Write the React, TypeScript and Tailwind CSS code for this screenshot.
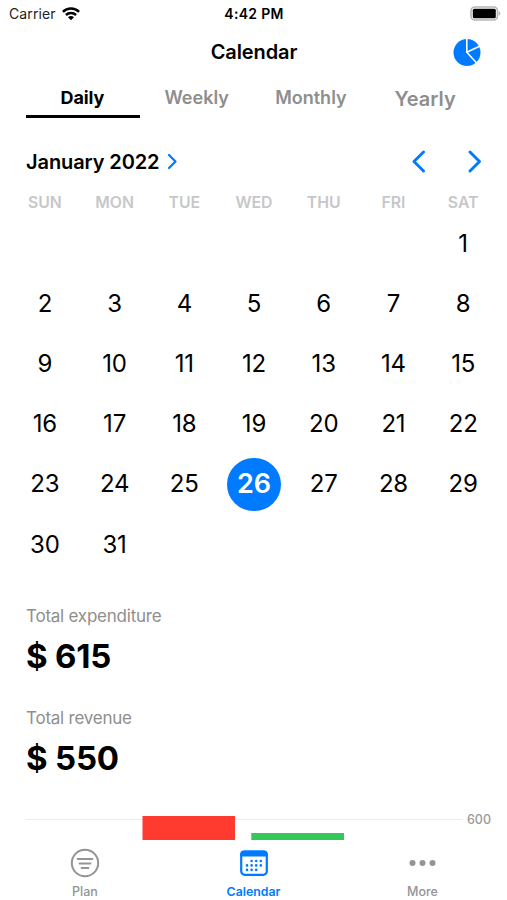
import React from 'react';

const weekdays = ['SUN', 'MON', 'TUE', 'WED', 'THU', 'FRI', 'SAT'];
const leadingBlanks = 6;
const selectedDay = 26;
const cells = [
  ...Array.from({ length: leadingBlanks }, () => 0),
  ...Array.from({ length: 31 }, (_, i) => i + 1),
];

const StatusBar = () => (
  <div className="grid h-[27px] grid-cols-3 items-center pl-[9px] pr-[6px] text-[14px] leading-none">
    <div className="flex items-center gap-[6px] text-[#222]">
      <span className="tracking-[0.1px]">Carrier</span>
      <svg width="18" height="14" viewBox="0 0 18 14" fill="none" stroke="#000" strokeWidth="2.5">
        <path d="M0.9 4.9C5.4 0.5 12.6 0.5 17.1 4.9" />
        <path d="M3.9 8C6.8 5.3 11.2 5.3 14.1 8" />
        <path d="M6 10.2C7.8 8.7 10.2 8.7 12 10.2L9 13.3Z" fill="#000" stroke="none" />
      </svg>
    </div>
    <span className="pt-px pr-[2px] text-center font-semibold tracking-[0.3px] whitespace-nowrap">4:42 PM</span>
    <div className="flex items-center justify-end">
      <svg width="31" height="15" viewBox="0 0 31 15">
        <rect x="1" y="1" width="26.5" height="13" rx="4" fill="#fff" stroke="#b5b5b5" strokeWidth="1.6" />
        <rect x="2.8" y="2.8" width="23" height="9.4" rx="1.5" fill="#000" />
        <path d="M28.8 5.3C30.8 6 30.8 9 28.8 9.7Z" fill="#b5b5b5" />
      </svg>
    </div>
  </div>
);

const Header = () => (
  <header className="grid h-[50px] grid-cols-3 items-center px-[26px]">
    <span />
    <h1 className="pl-px text-center text-[20px] font-semibold leading-none tracking-[-0.1px]">Calendar</h1>
    <button className="justify-self-end">
      <svg width="28" height="28" viewBox="0 0 28 28">
        <circle cx="14" cy="14.5" r="13.5" fill="#007aff" />
        <path d="M13.8 0V14.3L23.6 25M13.8 14.3L27 8" fill="none" stroke="#fff" strokeWidth="1.6" />
      </svg>
    </button>
  </header>
);

const Tabs = () => (
  <nav className="grid h-[41px] grid-cols-4 px-[26px] text-center text-[18px] font-semibold leading-[41px] text-[#8e8e8e]">
    <span className="h-[41px] border-b-[3px] border-black pr-px font-bold tracking-[-0.1px] text-black">Daily</span>
    <span>Weekly</span>
    <span className="pl-px">Monthly</span>
    <span className="pl-[2px] pt-[2px] text-[20px]">Yearly</span>
  </nav>
);

const Chevron = ({ size, stroke, left = false }: { size: number; stroke: number; left?: boolean }) => (
  <svg
    width={size / 2 + 2}
    height={size}
    viewBox={`0 0 ${size / 2 + 2} ${size}`}
    fill="none"
    stroke="#007aff"
    strokeWidth={stroke}
    strokeLinecap="round"
    strokeLinejoin="round"
    className={left ? 'rotate-180' : ''}
  >
    <path d={`M2 2L${size / 2} ${size / 2}L2 ${size - 2}`} />
  </svg>
);

const Month = () => (
  <section>
    <div className="flex h-[39px] items-center pl-[26px] pr-[26px]">
      <h2 className="pt-px text-[20px] font-semibold leading-none tracking-[-0.1px]">January 2022</h2>
      <span className="ml-[8px]"><Chevron size={17} stroke={2.3} /></span>
      <span className="ml-auto mr-[42px]"><Chevron size={23} stroke={2.9} left /></span>
      <Chevron size={23} stroke={2.9} />
    </div>
    <div className="grid h-[32.5px] grid-cols-7 pl-[10px] pr-[9px] pt-[12px] text-center text-[15.8px] font-semibold leading-[20px] text-[#c7c7c9]">
      {weekdays.map((d) => (
        <span key={d}>{d}</span>
      ))}
    </div>
    <div className="grid auto-rows-[60.2px] grid-cols-7 pl-[10px] pr-[9px] text-center text-[24px]">
      {cells.map((day, i) => (
        <div key={i} className="flex items-center justify-center">
          {day === selectedDay ? (
            <span className="flex size-[53.5px] items-center justify-center rounded-full bg-[#007aff] text-[27px] font-semibold text-white">
              {day}
            </span>
          ) : (
            day > 0 && <span className="tracking-[-0.2px]">{day}</span>
          )}
        </div>
      ))}
    </div>
  </section>
);

const Total = ({ label, value }: { label: string; value: number }) => (
  <div className="h-[101.5px] pl-[26px]">
    <p className="text-[17px] leading-[24px] tracking-[-0.23px] text-[#8e8e8e]">{label}</p>
    <p className="mt-[8px] text-[33px] font-bold leading-[40px] tracking-[-0.2px]">$ {value}</p>
  </div>
);

const Chart = () => (
  <div className="flex h-[33px] pl-[26px]">
    <svg width="436" height="33" viewBox="0 0 436 33">
      <path d="M0 12.5H436" stroke="#ececec" strokeWidth="1.2" />
      <rect x="116.5" y="9" width="92.5" height="24" fill="#ff3b30" />
      <rect x="225.3" y="26" width="92.7" height="7" fill="#34c759" />
    </svg>
    <span className="ml-[5px] text-[12.5px] leading-[25px] font-medium text-[#9a9a9a]">600</span>
  </div>
);

const TabBar = () => (
  <nav className="grid h-[60px] grid-cols-3 text-center text-[12.5px] font-medium leading-[16px] text-[#949494]">
    <div className="flex flex-col items-center pl-px pt-[7px]">
      <svg width="30" height="32" viewBox="0 0 30 32" fill="none" stroke="#949494" strokeLinecap="round">
        <circle cx="15" cy="16" r="13.2" strokeWidth="2" />
        <path d="M7.6 12H22.4M9.6 16.4H20.4M11.6 21H18.4" strokeWidth="2" />
      </svg>
      <span className="mt-[5px]">Plan</span>
    </div>
    <div className="flex flex-col items-center pt-[7px] font-semibold text-[#007aff]">
      <svg width="30" height="32" viewBox="0 0 30 32">
        <rect x="2.2" y="4.7" width="25.6" height="23.1" rx="3.5" fill="#fff" stroke="#007aff" strokeWidth="2.2" />
        <path d="M1.1 9.5V7.5Q1.1 3.6 5 3.6H25Q28.9 3.6 28.9 7.5V9.5Z" fill="#007aff" />
        <g fill="#007aff">
          <circle cx="12.6" cy="14" r="1.3" />
          <circle cx="17.2" cy="14" r="1.3" />
          <circle cx="21.8" cy="14" r="1.3" />
          <circle cx="8" cy="18.4" r="1.3" />
          <circle cx="12.6" cy="18.4" r="1.3" />
          <circle cx="17.2" cy="18.4" r="1.3" />
          <circle cx="21.8" cy="18.4" r="1.3" />
          <circle cx="8" cy="22.9" r="1.3" />
          <circle cx="12.6" cy="22.9" r="1.3" />
          <circle cx="17.2" cy="22.9" r="1.3" />
        </g>
      </svg>
      <span className="mt-[5px] text-[12.3px]">Calendar</span>
    </div>
    <div className="flex flex-col items-center pt-[7px]">
      <svg width="30" height="32" viewBox="0 0 30 32" fill="#949494">
        <circle cx="4.5" cy="16" r="3" />
        <circle cx="14.5" cy="16" r="3" />
        <circle cx="24.5" cy="16" r="3" />
      </svg>
      <span className="mt-[5px]">More</span>
    </div>
  </nav>
);

const App: React.FC = () => {
  return (
    <div className="h-[900px] w-full overflow-hidden bg-white font-['Inter',sans-serif] text-black">
      <StatusBar />
      <Header />
      <Tabs />
      <div className="h-[24px]" />
      <Month />
      <div className="h-[29.5px]" />
      <Total label="Total expenditure" value={615} />
      <Total label="Total revenue" value={550} />
      <Chart />
      <TabBar />
    </div>
  );
};

export default App;
